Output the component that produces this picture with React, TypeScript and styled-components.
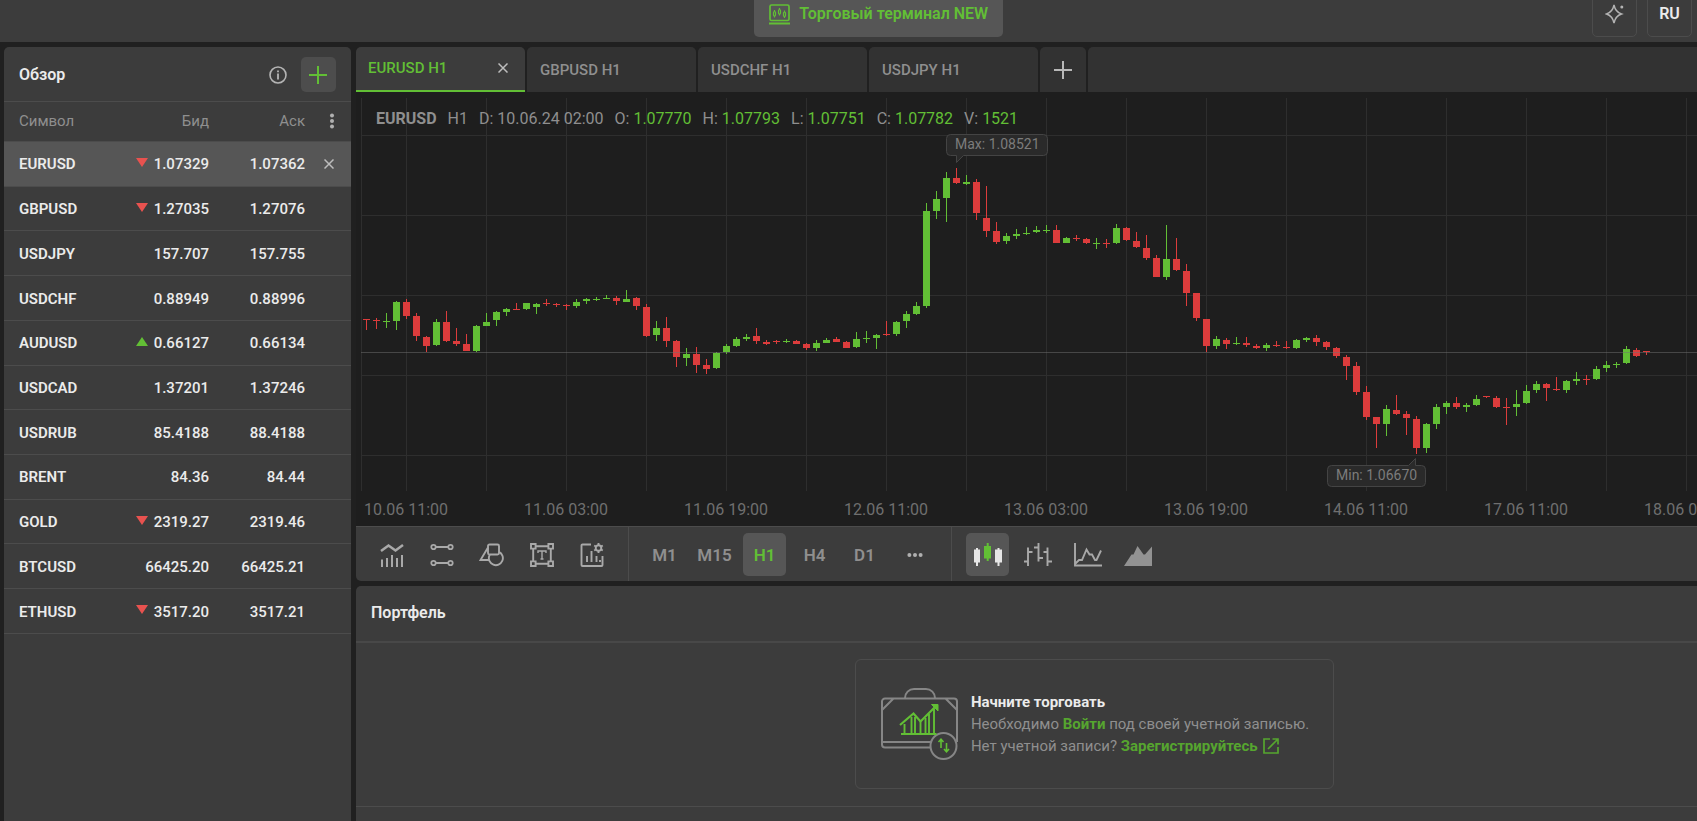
import React from "react";
import styled, { createGlobalStyle } from "styled-components";

const color = {
  page: "#202020",
  chart: "#1e1e1e",
  panel: "#3c3c3c",
  tab: "#323232",
  raised: "#565656",
  button: "#4d4d4d",
  line: "#4c4c4c",
  text: "#ebebeb",
  muted: "#8f8f8f",
  dim: "#6f6f6f",
  icon: "#a9a9a9",
  green: "#62bf35",
  link: "#56a52f",
  red: "#e8524f",
  up: "#62bf35",
  down: "#dc3c3c",
};

const GlobalStyle = createGlobalStyle`
  *, *::before, *::after { box-sizing: border-box; }
  body {
    margin: 0;
    background: ${color.page};
    color: ${color.text};
    font-family: Roboto, "Liberation Sans", sans-serif;
    font-size: 15px;
    line-height: 20px;
  }
  button {
    padding: 0;
    border: 0;
    background: none;
    color: inherit;
    font: inherit;
    cursor: pointer;
  }
  svg { display: block; flex: none; }
`;

const Page = styled.div`
  display: flex;
  flex-direction: column;
  min-height: 100vh;
`;

const TopBar = styled.header`
  display: grid;
  grid-template-columns: minmax(0, 25fr) auto minmax(0, 23fr);
  grid-template-rows: 37px;
  align-items: end;
  height: 42px;
  overflow: hidden;
  background: ${color.panel};
`;

const TerminalButton = styled.button`
  grid-column: 2;
  display: flex;
  align-items: center;
  gap: 9px;
  height: 46px;
  padding: 0 15px;
  border-radius: 5px;
  background: ${color.raised};
  color: ${color.green};
  font-size: 16px;
  font-weight: 600;
  white-space: nowrap;
`;

const TopActions = styled.div`
  display: flex;
  justify-content: flex-end;
  gap: 10px;
  padding-right: 5px;
`;

const TopButton = styled.button`
  display: flex;
  align-items: center;
  justify-content: center;
  width: 45px;
  height: 46px;
  border: 1px solid ${color.line};
  border-radius: 5px;
  font-size: 16px;
  font-weight: 600;
`;

const Workspace = styled.main`
  display: grid;
  grid-template-columns: 347px minmax(0, 1fr);
  gap: 5px;
  flex: 1;
  padding: 5px 0 0 4px;
`;

const Sidebar = styled.aside`
  border-radius: 5px 5px 0 0;
  background: ${color.panel};
`;

const SidebarHeader = styled.div`
  display: flex;
  align-items: center;
  gap: 14px;
  height: 55px;
  padding: 1px 15px 0;
  border-bottom: 1px solid ${color.line};
`;

const PanelTitle = styled.h2`
  flex: 1;
  margin: 0;
  font-size: 16px;
  font-weight: 600;
`;

const AddButton = styled.button`
  display: grid;
  place-items: center;
  width: 35px;
  height: 35px;
  padding: 1px 1px 0 0;
  border-radius: 5px;
  background: ${color.button};
`;

const QuoteTable = styled.table`
  width: 100%;
  height: 532px;
  border-collapse: separate;
  border-spacing: 0;
  table-layout: fixed;
`;

const HeadCell = styled.th<{ $right?: boolean }>`
  height: 40px;
  padding: 0 0 1px ${(p) => (p.$right ? 0 : 15)}px;
  color: ${color.muted};
  font-weight: 400;
  text-align: ${(p) => (p.$right ? "right" : "left")};
  border-bottom: 1px solid ${color.line};
`;

const QuoteRow = styled.tr<{ $active?: boolean }>`
  background: ${(p) => (p.$active ? color.raised : "transparent")};
`;

const SymbolCell = styled.th`
  padding: 1px 0 0 15px;
  font-weight: 600;
  text-align: left;
  border-bottom: 1px solid ${color.line};
`;

const PriceCell = styled.td`
  padding: 1px 0 0;
  font-weight: 500;
  text-align: right;
  border-bottom: 1px solid ${color.line};
`;

const Price = styled.span`
  display: flex;
  align-items: center;
  justify-content: flex-end;
  gap: 6px;
`;

const Trend = styled.svg`
  margin-bottom: 4px;
`;

const RowButton = styled.button<{ $wide?: boolean }>`
  display: grid;
  place-items: center;
  width: ${(p) => (p.$wide ? 26 : 20)}px;
  height: 20px;
  margin-left: 14px;
`;

const MainColumn = styled.div`
  display: flex;
  flex-direction: column;
  min-width: 0;
`;

const Tabs = styled.div`
  display: flex;
  gap: 2px;
  height: 45px;
`;

const Tab = styled.div<{ $active?: boolean }>`
  display: flex;
  align-items: center;
  justify-content: space-between;
  width: 169px;
  padding: ${(p) => (p.$active ? "0 17px 2px 12px" : "0 13px")};
  border-radius: 5px 5px 0 0;
  border-bottom: ${(p) => (p.$active ? `2px solid ${color.green}` : 0)};
  background: ${(p) => (p.$active ? color.panel : color.tab)};
  color: ${(p) => (p.$active ? color.green : color.muted)};
  font-weight: 500;
`;

const AddTab = styled.button`
  display: grid;
  place-items: center;
  width: 46px;
  border-radius: 5px 5px 0 0;
  background: ${color.tab};
`;

const TabFiller = styled.div`
  flex: 1;
  border-radius: 5px 0 0 0;
  background: ${color.tab};
`;

const ChartArea = styled.section`
  position: relative;
  overflow: hidden;
  background: ${color.chart};
`;

const Ohlc = styled.div`
  position: absolute;
  top: 17px;
  left: 20px;
  display: flex;
  gap: 11px;
  color: ${color.muted};
  font-size: 16px;
  white-space: nowrap;

  b { font-weight: 700; }
  em { color: ${color.green}; font-style: normal; }
`;

const Toolbar = styled.div`
  display: flex;
  border-top: 1px solid ${color.line};
  border-radius: 0 0 0 5px;
  background: ${color.panel};
`;

const ToolGroup = styled.div<{ $last?: boolean }>`
  display: flex;
  gap: 7px;
  padding: 6px 15px 5px 14px;
  border-right: ${(p) => (p.$last ? 0 : `1px solid ${color.line}`)};
`;

const ToolButton = styled.button<{ $active?: boolean }>`
  display: grid;
  place-items: center;
  width: 43px;
  height: 43px;
  border-radius: 5px;
  background: ${(p) => (p.$active ? color.raised : "transparent")};
  color: ${(p) => (p.$active ? color.green : color.muted)};
  font-size: 17px;
  font-weight: 600;
`;

const Portfolio = styled.section`
  flex: 1;
  margin-top: 5px;
  border-radius: 5px 0 0 0;
  background: ${color.panel};
`;

const PortfolioHeader = styled.div`
  display: flex;
  align-items: center;
  height: 57px;
  padding: 0 15px 2px;
  border-bottom: 2px solid #484848;
`;

const PortfolioBody = styled.div`
  display: grid;
  grid-template-columns: minmax(0, 11fr) auto minmax(0, 8fr);
  padding: 16px 0 17px;
  border-bottom: 1px solid ${color.line};
`;

const StartCard = styled.div`
  grid-column: 2;
  display: flex;
  align-items: center;
  gap: 13px;
  height: 130px;
  padding: 0 24px 0 25px;
  border: 1px solid ${color.line};
  border-radius: 6px;
`;

const CardText = styled.p`
  margin: 0;
  color: ${color.muted};
  line-height: 22px;
  white-space: nowrap;
`;

const CardTitle = styled.strong`
  display: block;
  color: ${color.text};
  font-weight: 700;
`;

const CardLink = styled.a`
  display: inline-flex;
  align-items: center;
  gap: 5px;
  color: ${color.link};
  font-weight: 700;
  text-decoration: none;
`;

type Dir = "up" | "down" | null;

const quotes: [string, Dir, string, string][] = [
  ["EURUSD", "down", "1.07329", "1.07362"],
  ["GBPUSD", "down", "1.27035", "1.27076"],
  ["USDJPY", null, "157.707", "157.755"],
  ["USDCHF", null, "0.88949", "0.88996"],
  ["AUDUSD", "up", "0.66127", "0.66134"],
  ["USDCAD", null, "1.37201", "1.37246"],
  ["USDRUB", null, "85.4188", "88.4188"],
  ["BRENT", null, "84.36", "84.44"],
  ["GOLD", "down", "2319.27", "2319.46"],
  ["BTCUSD", null, "66425.20", "66425.21"],
  ["ETHUSD", "down", "3517.20", "3517.21"],
];

const tabs = ["GBPUSD H1", "USDCHF H1", "USDJPY H1"];

const ohlc: [string, string][] = [
  ["O", "1.07770"],
  ["H", "1.07793"],
  ["L", "1.07751"],
  ["C", "1.07782"],
  ["V", "1521"],
];

const timeLabels = [
  "10.06 11:00",
  "11.06 03:00",
  "11.06 19:00",
  "12.06 11:00",
  "13.06 03:00",
  "13.06 19:00",
  "14.06 11:00",
  "17.06 11:00",
  "18.06 03:00",
];

// One candle per entry: direction, wick top, body top, body bottom, wick bottom.
const candles = `
r319,319,320,330 r318,320,321,329 g313,321,322,328 g301,302,321,330 r299,302,316,319
r313,316,336,341 r336,337,346,352 g319,322,345,346 r311,322,341,342 r328,341,344,346
r334,344,351,351 g325,326,351,352 g313,322,326,326 g311,312,320,326 g308,309,312,316
r303,309,310,310 g303,303,309,310 g303,304,307,314 r299,303,304,306 r303,304,305,307
r304,305,306,310 g299,302,306,308 g298,299,301,304 g297,299,300,301 g295,298,299,299
r296,298,301,305 g290,299,302,302 r297,298,306,310 r304,307,336,337 g321,328,335,341
r317,328,341,347 r340,341,357,367 g348,354,358,366 r347,354,365,373 r359,365,369,374
g352,353,368,369 g344,346,352,354 g337,339,346,347 g334,337,339,341 r328,336,341,344
r340,342,344,345 r340,341,342,344 g339,341,342,343 r340,341,344,344 r343,344,348,350
g340,343,348,351 g338,340,343,343 r337,339,342,342 r341,342,348,348 g332,339,347,348
g331,338,339,343 g334,335,338,349 r321,334,335,336 g321,322,334,336 g311,314,321,328
g302,306,314,315 g203,211,306,308 g191,199,211,219 g172,178,198,222 r168,178,183,184
g175,182,184,185 r179,182,213,220 r186,218,231,237 r222,231,242,244 g233,236,241,244
g229,234,236,239 g227,233,234,235 g226,230,232,233 g225,230,231,233 r225,230,243,243
g237,238,243,243 r235,238,239,241 r238,239,243,244 g238,243,244,249 r239,243,244,248
g224,228,243,244 r227,228,240,241 r232,241,247,248 r235,248,258,260 r255,258,277,277
g225,259,277,280 r238,259,270,271 r264,271,293,306 r293,293,318,321 r319,319,346,352
g336,339,346,349 r338,340,344,349 g337,343,344,345 r337,343,345,347 r344,346,348,349
g343,345,348,351 r341,345,346,347 r341,347,348,349 g339,340,348,349 g337,338,340,342
r335,338,342,346 r341,342,347,350 r347,348,356,358 r355,357,366,380 r362,366,392,395
r386,392,417,420 r417,417,424,448 g405,409,424,436 r395,410,414,415 r411,414,418,435
r416,419,448,454 g423,424,448,453 g404,407,424,429 g401,403,407,414 r397,403,407,409
g403,405,407,412 g395,399,405,406 r396,396,397,398 r396,398,407,408 r398,407,408,425
g390,404,407,416 g385,391,403,404 g381,384,390,393 r383,384,388,401 r377,389,390,391
g380,381,390,393 g372,379,381,385 r375,379,380,385 g366,369,379,380 g361,365,368,372
g362,364,365,368 g346,349,363,364 r348,350,356,357 r351,351,352,355`
  .trim()
  .split(/\s+/)
  .map((s) => ({ dir: s[0], v: s.slice(1).split(",").map((n) => Number(n) - 92) }));

const Chart = () => (
  <svg width="100%" height="434" fontFamily="Roboto, sans-serif" shapeRendering="crispEdges" role="img" aria-label="EURUSD H1">
    <g fill="#2e2e2e">
      <rect x="5" y="6" width="1" height="393" />
      {Array.from({ length: 32 }, (_, i) => (
        <rect key={i} x={50 + i * 80} y="6" width="1" height="393" />
      ))}
      {Array.from({ length: 5 }, (_, i) => (
        <rect key={i} x="5" y={43 + i * 80} width="100%" height="1" />
      ))}
    </g>
    {candles.map(({ dir, v: [high, top, bottom, low] }, i) => (
      <g key={i} fill={dir === "g" ? color.up : color.down}>
        <rect x={10 + i * 10} y={high} width="1" height={low - high} />
        <rect x={7 + i * 10} y={top} width="7" height={bottom - top} />
      </g>
    ))}
    <rect x="5" y="260" width="100%" height="1" fill="#707070" fillOpacity="0.5" />
    <g fill="#2a2a2a" stroke="#444" shapeRendering="auto">
      <path d="M594.500 42.500h93a4 4 0 0 1 4 4v13a4 4 0 0 1-4 4h-80l-7 7v-7h-6a4 4 0 0 1-4-4v-13a4 4 0 0 1 4-4z" />
      <path d="M975.500 373.500h77l7-7v7h6a4 4 0 0 1 4 4v13a4 4 0 0 1-4 4h-90a4 4 0 0 1-4-4v-13a4 4 0 0 1 4-4z" />
    </g>
    <g fill="#7c7c7c" fontSize="14">
      <text x="599" y="57">Max: 1.08521</text>
      <text x="980" y="388">Min: 1.06670</text>
    </g>
    <g fill={color.dim} fontSize="16" textAnchor="middle">
      {timeLabels.map((label, i) => (
        <text key={label} x={50 + i * 160} y="423">{label}</text>
      ))}
    </g>
  </svg>
);

const Plus = ({ stroke }: { stroke: string }) => (
  <svg width="18" height="18" viewBox="0 0 18 18" stroke={stroke} strokeWidth="2">
    <path d="M9 0v18M0 9h18" />
  </svg>
);

const Cross = ({ size }: { size: number }) => (
  <svg width={size} height={size} viewBox="0 0 10 10" stroke="#bdbdbd" strokeWidth="1.500">
    <path d="M.5.5l9 9M9.500.5l-9 9" />
  </svg>
);

const InfoIcon = () => (
  <svg width="18" height="18" viewBox="0 0 18 18" fill="none" stroke="#b4b4b4">
    <circle cx="9" cy="9" r="8" strokeWidth="1.600" />
    <path d="M9 7.500v6M9 4.500v1.800" strokeWidth="1.800" />
  </svg>
);

const TerminalIcon = () => (
  <svg width="21" height="21" viewBox="0 0 21 21" fill="none" stroke={color.green}>
    <rect x="1" y="1" width="19" height="15.500" rx="1.500" strokeWidth="1.700" />
    <path d="M0 19.500h21" strokeWidth="2" />
    <path d="M5.500 6v1.500M5.500 12v1.500M10.500 4v1.500M10.500 10v1.500M15.500 6.500v1.500M15.500 12.500v1.500" strokeWidth="1.200" />
    <g strokeWidth="1.200">
      <rect x="4.500" y="7.500" width="2" height="4.500" rx="1" />
      <rect x="9.500" y="5.500" width="2" height="4.500" rx="1" />
      <rect x="14.500" y="8" width="2" height="4.500" rx="1" />
    </g>
  </svg>
);

const SparkleIcon = () => (
  <svg width="20" height="20" viewBox="0 0 20 20" fill="none" stroke="#b4b4b4" strokeWidth="1.400">
    <path d="M9 1c1 4.800 3 7.600 7.500 9C12 11.400 10 14.200 9 19c-1-4.800-3-7.600-7.500-9C6 8.600 8 5.800 9 1z" />
    <circle cx="16.800" cy="3" r="1.500" fill="#b4b4b4" stroke="none" />
  </svg>
);

const DotsIcon = ({ vertical }: { vertical?: boolean }) => (
  <svg width="16" height="16" viewBox="0 0 16 16" fill="#b0b0b0" transform={vertical ? "rotate(90)" : undefined}>
    <circle cx="2.400" cy="8" r="2" />
    <circle cx="8" cy="8" r="2" />
    <circle cx="13.600" cy="8" r="2" />
  </svg>
);

const TrendIcon = ({ dir }: { dir: "up" | "down" }) => (
  <Trend width="12" height="9" viewBox="0 0 12 9" aria-label={dir}>
    <path d={dir === "down" ? "M0 0h12L6 9z" : "M0 9h12L6 0z"} fill={dir === "down" ? color.red : color.green} />
  </Trend>
);

const IndicatorsIcon = () => (
  <svg width="24" height="24" viewBox="0 0 24 24" fill="none" stroke={color.icon} strokeWidth="2.500">
    <path d="M1 8l7.500-5.500 7 5L23 2" />
    <path d="M2 16.500V24M7 15v9M12 12v12M17 15v9M22 12v12" strokeWidth="2" />
  </svg>
);

const LinesIcon = () => (
  <svg width="24" height="24" viewBox="0 0 24 24" fill="none" stroke={color.icon} strokeWidth="1.800">
    <path d="M5.500 4h13M5.500 20h13" />
    <circle cx="3.500" cy="4" r="2.200" />
    <circle cx="20.500" cy="4" r="2.200" />
    <circle cx="3.500" cy="20" r="2.200" />
    <circle cx="20.500" cy="20" r="2.200" />
  </svg>
);

const ShapesIcon = () => (
  <svg width="26" height="24" viewBox="0 0 26 24" fill="none" stroke={color.icon} strokeWidth="1.900">
    <rect x="9" y="1.500" width="11" height="10" rx="1.500" />
    <path d="M9 4.500L1.500 17h9M20 8.900a7 7 0 1 1-9.800 4.100c.1-.6.3-1.100.6-1.500" />
  </svg>
);

const TextIcon = () => (
  <svg width="24" height="24" viewBox="0 0 24 24" fill="none" stroke={color.icon} strokeWidth="1.900">
    <path d="M6 3.200h12M6 20.800h12M3.200 6v12M20.800 6v12" />
    <path d="M1 1h4.600v4.600H1zM18.400 1H23v4.600h-4.600zM1 18.400h4.600V23H1zM18.400 18.400H23V23h-4.600z" />
    <path d="M8 10V8h8v2M12 8v8M10.500 16h3" strokeWidth="1.400" />
  </svg>
);

const ChartSettingsIcon = () => (
  <svg width="24" height="24" viewBox="0 0 24 24" fill="none" stroke={color.icon} strokeWidth="1.900">
    <path d="M11 1.500H2.500A1 1 0 0 0 1.500 2.500v19.500a1 1 0 0 0 1 1h19a1 1 0 0 0 1-1v-9" />
    <path d="M7 13v6M11.500 8v11M16.500 13v6M20 17v2" />
    <circle cx="18.500" cy="5" r="2.800" />
    <path d="M18.500 0v2M18.500 8v2M14.200 2.500l1.700 1M21.100 6.500l1.700 1M14.200 7.500l1.700-1M21.100 3.500l1.700-1" />
  </svg>
);

const CandlesIcon = () => (
  <svg width="28" height="24" viewBox="0 0 28 24" fill="#e6e6e6">
    <path d="M2 5h2v1.500h2v13H4V23H2v-3.500H0v-13h2zM23.500 5h2v1.500H28v13h-2.500V23h-2v-3.500H21v-13h2.500z" />
    <path d="M12.700 0h2v3H17v12.500h-2.300V18h-2v-2.500H10V3h2.700z" fill={color.green} />
  </svg>
);

const BarsIcon = () => (
  <svg width="28" height="24" viewBox="0 0 28 24" fill="none" stroke={color.icon} strokeWidth="1.900">
    <path d="M4 4.500V23M0 18.500h4M4 9h4.500M14.500 0v18.500M10 4.500h4.500M14.500 15H19M23.500 4.500V23M19.500 9h4M23.500 18.500H28" />
  </svg>
);

const LineChartIcon = () => (
  <svg width="28" height="24" viewBox="0 0 28 24" fill="none" stroke={color.icon} strokeWidth="1.900">
    <path d="M1 0v22.500h27" />
    <path d="M1.500 20.500L5 17h3l4.500-10.500 3 5H18l3 5.500h1.500L27 7.500" />
  </svg>
);

const AreaChartIcon = () => (
  <svg width="28" height="24" viewBox="0 0 28 24" fill="#929292">
    <path d="M0 23L7.500 11.500h2L13.500 3l6 8.500h1.500L28 3.500V23z" />
  </svg>
);

const BriefcaseIcon = () => (
  <svg width="77" height="72" viewBox="0 0 77 72" fill="none" stroke="#868686" strokeWidth="2">
    <path d="M24 10.500V10a9 9 0 0 1 9-9h12a9 9 0 0 1 9 9v.5" />
    <path d="M49.500 59.500H4a3 3 0 0 1-3-3v-43a3 3 0 0 1 3-3h69a3 3 0 0 1 3 3V54M1 54h49.500M1.500 21.500l11-11M64.500 10.500l11 11" />
    <circle cx="62.500" cy="58" r="13" />
    <g stroke={color.green}>
      <path d="M19 37l13.500-11.500 7 8L55 18M20 46h35.500" strokeWidth="2.200" />
      <path d="M50.500 16.500H57v6.500z" fill={color.green} strokeWidth="1" />
      <path d="M23.500 36v9M30.500 29v16M34 29v16M39.500 33v12M44.500 30v15M48 26v19M53 21v24" strokeWidth="1.900" />
      <path d="M60 60v-8M65.500 55v8M57.500 54l2.500-2.700 2.500 2.700M63 61l2.500 2.700L68 61" strokeWidth="1.600" />
    </g>
  </svg>
);

const ExternalIcon = () => (
  <svg width="16" height="16" viewBox="0 0 16 16" fill="none" stroke={color.link} strokeWidth="1.700">
    <path d="M7 1H1v14h14V9M9.500 1H15v5.500M15 1L5 11" />
  </svg>
);

const drawingTools: [string, React.FC][] = [
  ["Индикаторы", IndicatorsIcon],
  ["Линии", LinesIcon],
  ["Фигуры", ShapesIcon],
  ["Текст", TextIcon],
  ["Настройки графика", ChartSettingsIcon],
];

const chartTypes: [string, React.FC][] = [
  ["Свечи", CandlesIcon],
  ["Бары", BarsIcon],
  ["Линия", LineChartIcon],
  ["Область", AreaChartIcon],
];

export default function App() {
  return (
    <Page>
      <GlobalStyle />
      <TopBar>
        <TerminalButton>
          <TerminalIcon />
          Торговый терминал NEW
        </TerminalButton>
        <TopActions>
          <TopButton aria-label="Новое"><SparkleIcon /></TopButton>
          <TopButton>RU</TopButton>
        </TopActions>
      </TopBar>

      <Workspace>
        <Sidebar>
          <SidebarHeader>
            <PanelTitle>Обзор</PanelTitle>
            <button aria-label="Информация"><InfoIcon /></button>
            <AddButton aria-label="Добавить символ"><Plus stroke={color.green} /></AddButton>
          </SidebarHeader>
          <QuoteTable>
            <colgroup>
              <col width="109" />
              <col width="96" />
              <col width="96" />
              <col width="46" />
            </colgroup>
            <thead>
              <tr>
                <HeadCell>Символ</HeadCell>
                <HeadCell $right>Бид</HeadCell>
                <HeadCell $right>Аск</HeadCell>
                <HeadCell $right>
                  <RowButton $wide aria-label="Меню"><DotsIcon vertical /></RowButton>
                </HeadCell>
              </tr>
            </thead>
            <tbody>
              {quotes.map(([symbol, dir, bid, ask], i) => (
                <QuoteRow key={symbol} $active={i === 0}>
                  <SymbolCell scope="row">{symbol}</SymbolCell>
                  <PriceCell>
                    <Price>{dir && <TrendIcon dir={dir} />}{bid}</Price>
                  </PriceCell>
                  <PriceCell>{ask}</PriceCell>
                  <PriceCell>
                    {i === 0 && <RowButton aria-label="Удалить"><Cross size={10} /></RowButton>}
                  </PriceCell>
                </QuoteRow>
              ))}
            </tbody>
          </QuoteTable>
        </Sidebar>

        <MainColumn>
          <Tabs>
            <Tab $active>
              <button>EURUSD H1</button>
              <button aria-label="Закрыть"><Cross size={10} /></button>
            </Tab>
            {tabs.map((name) => (
              <Tab key={name}><button>{name}</button></Tab>
            ))}
            <AddTab aria-label="Новый график"><Plus stroke="#b8b8b8" /></AddTab>
            <TabFiller />
          </Tabs>

          <ChartArea>
            <Chart />
            <Ohlc>
              <b>EURUSD</b>
              <span>H1</span>
              <span>D: 10.06.24 02:00</span>
              {ohlc.map(([name, value]) => (
                <span key={name}>{name}: <em>{value}</em></span>
              ))}
            </Ohlc>
          </ChartArea>

          <Toolbar>
            <ToolGroup>
              {drawingTools.map(([label, Icon]) => (
                <ToolButton key={label} aria-label={label}><Icon /></ToolButton>
              ))}
            </ToolGroup>
            <ToolGroup>
              {["M1", "M15", "H1", "H4", "D1"].map((frame) => (
                <ToolButton key={frame} $active={frame === "H1"}>{frame}</ToolButton>
              ))}
              <ToolButton aria-label="Ещё"><DotsIcon /></ToolButton>
            </ToolGroup>
            <ToolGroup $last>
              {chartTypes.map(([label, Icon], i) => (
                <ToolButton key={label} $active={i === 0} aria-label={label}><Icon /></ToolButton>
              ))}
            </ToolGroup>
          </Toolbar>

          <Portfolio>
            <PortfolioHeader>
              <PanelTitle>Портфель</PanelTitle>
            </PortfolioHeader>
            <PortfolioBody>
              <StartCard>
                <BriefcaseIcon />
                <CardText>
                  <CardTitle>Начните торговать</CardTitle>
                  Необходимо <CardLink href="#login">Войти</CardLink> под своей учетной записью.
                  <br />
                  Нет учетной записи? <CardLink href="#register">Зарегистрируйтесь <ExternalIcon /></CardLink>
                </CardText>
              </StartCard>
            </PortfolioBody>
          </Portfolio>
        </MainColumn>
      </Workspace>
    </Page>
  );
}
